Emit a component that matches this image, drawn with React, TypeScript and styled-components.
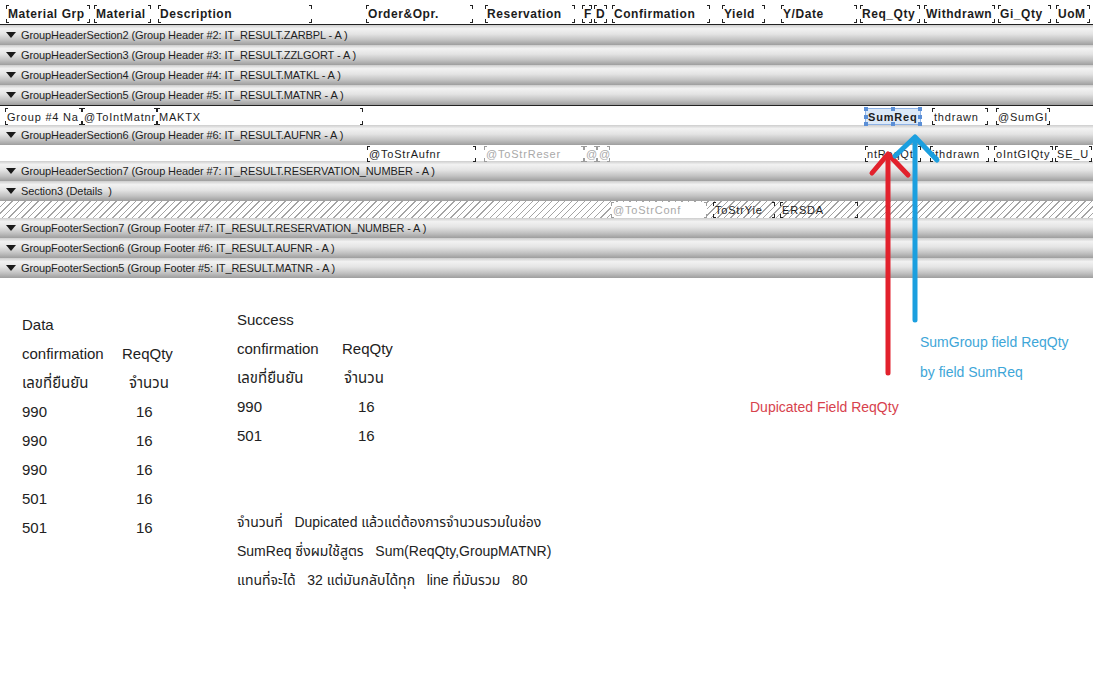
import React from "react";
import styled, { createGlobalStyle, css } from "styled-components";

const Global = createGlobalStyle`
  html, body { margin: 0; padding: 0; background: #fff; }
  body { font-family: "Liberation Sans", Arial, "Noto Sans Thai", "Noto Sans", sans-serif; color: #222; }
`;

const Page = styled.div`
  position: relative;
  width: 1093px;
  height: 700px;
  overflow: hidden;
  background: #fff;
`;

const Designer = styled.div`
  display: flex;
  flex-direction: column;
`;

const HeaderRow = styled.div`
  position: relative;
  height: 24px;
  border-bottom: 1px solid #222;
`;

const Band = styled.div<{ $h: number; $top?: boolean; $hatch?: boolean }>`
  position: relative;
  box-sizing: border-box;
  height: ${(p) => p.$h}px;
  background: #fff;
  ${(p) => p.$top && css`border-top: 1px solid #222;`}
  ${(p) =>
    p.$hatch &&
    css`
      background: repeating-linear-gradient(135deg, #fff 0 3.6px, #a4a4a4 3.6px 4.6px);
    `}
`;

const Bar = styled.div`
  display: flex;
  align-items: center;
  gap: 4px;
  height: 20px;
  padding-left: 6px;
  box-sizing: border-box;
  background: linear-gradient(
    to bottom,
    #cdcdcd 0%,
    #f2f2f2 18%,
    #e4e4e4 45%,
    #c2c2c2 75%,
    #9e9e9e 100%
  );
  font-size: 11px;
  letter-spacing: -0.1px;
  color: #1e1e1e;
  white-space: pre;
`;

const Tri = styled.span`
  width: 0;
  height: 0;
  border-left: 5px solid transparent;
  border-right: 5px solid transparent;
  border-top: 6px solid #1a1a1a;
  margin-right: 1px;
`;

const tick = (c: string) => `
  linear-gradient(${c},${c}) left top / 1px 4px no-repeat,
  linear-gradient(${c},${c}) left top / 3px 1px no-repeat,
  linear-gradient(${c},${c}) left bottom / 1px 4px no-repeat,
  linear-gradient(${c},${c}) left bottom / 3px 1px no-repeat,
  linear-gradient(${c},${c}) right top / 1px 4px no-repeat,
  linear-gradient(${c},${c}) right top / 3px 1px no-repeat,
  linear-gradient(${c},${c}) right bottom / 1px 4px no-repeat,
  linear-gradient(${c},${c}) right bottom / 3px 1px no-repeat`;

const Field = styled.div<{
  $x: number;
  $w: number;
  $top: number;
  $h: number;
  $muted?: boolean;
  $bold?: boolean;
  $fill?: boolean;
  $head?: boolean;
  $sel?: boolean;
}>`
  position: absolute;
  left: ${(p) => p.$x}px;
  top: ${(p) => p.$top}px;
  width: ${(p) => p.$w}px;
  height: ${(p) => p.$h}px;
  box-sizing: border-box;
  padding-left: 2px;
  display: flex;
  align-items: center;
  white-space: pre;
  overflow: hidden;
  color: ${(p) => (p.$muted ? "#a9a9a9" : "#1c1c1c")};
  font-size: ${(p) => (p.$head ? "12px" : "11px")};
  font-weight: ${(p) => (p.$bold ? 700 : 400)};
  letter-spacing: ${(p) => (p.$head ? "0.55px" : "0.8px")};
  background: ${(p) => tick(p.$muted ? "#9c9c9c" : "#222")}
    ${(p) => (p.$fill ? ", #fff" : "")};
  ${(p) =>
    p.$sel &&
    css`
      overflow: visible;
      background: #dce9f8;
      border: 1px solid #8fb3e6;
    `}
`;

const Handle = styled.span<{ $l: string; $t: string }>`
  position: absolute;
  left: ${(p) => p.$l};
  top: ${(p) => p.$t};
  width: 4px;
  height: 4px;
  margin: -2px 0 0 -2px;
  background: #5b8fd6;
`;

const Notes = styled.div`
  display: flex;
  align-items: flex-start;
`;

const DataCol = styled.div`
  margin-left: 22px;
  width: 215px;
  padding-top: 32px;
`;

const SuccessCol = styled.div`
  width: 513px;
  padding-top: 27px;
`;

const Table = styled.div<{ $first: number }>`
  display: grid;
  grid-template-columns: ${(p) => p.$first}px auto;
  font-size: 15px;
  line-height: 29px;
  color: #222;
`;

const Cell = styled.div<{ $in?: number; $span?: boolean }>`
  padding-left: ${(p) => p.$in ?? 0}px;
  white-space: pre;
  ${(p) => p.$span && css`grid-column: 1 / span 2;`}
`;

const Para = styled.div`
  margin-top: 58px;
  font-size: 14px;
  line-height: 29px;
  white-space: pre;
  color: #222;
`;

const CalloutCol = styled.div`
  display: flex;
  flex-direction: column;
  padding-top: 49px;
`;

const BlueNote = styled.div`
  margin-left: 170px;
  font-size: 14px;
  line-height: 30px;
  color: #3ea6d8;
`;

const RedNote = styled.div`
  margin-top: 5px;
  font-size: 14px;
  line-height: 30px;
  color: #d7424d;
`;

const Overlay = styled.svg`
  position: absolute;
  left: 0;
  top: 0;
  pointer-events: none;
`;

type F = { x: number; w: number; t: string; muted?: boolean; bold?: boolean; fill?: boolean; sel?: boolean };

const headerFields: F[] = [
  { x: 6, w: 84, t: "Material Grp", bold: true },
  { x: 94, w: 57, t: "Material", bold: true },
  { x: 158, w: 154, t: "Description", bold: true },
  { x: 366, w: 107, t: "Order&Opr.", bold: true },
  { x: 485, w: 90, t: "Reservation", bold: true },
  { x: 582, w: 10, t: "F", bold: true },
  { x: 594, w: 13, t: "D", bold: true },
  { x: 612, w: 98, t: "Confirmation", bold: true },
  { x: 722, w: 43, t: "Yield", bold: true },
  { x: 781, w: 76, t: "Y/Date", bold: true },
  { x: 860, w: 60, t: "Req_Qty", bold: true },
  { x: 924, w: 71, t: "Withdrawn", bold: true },
  { x: 998, w: 53, t: "Gi_Qty", bold: true },
  { x: 1056, w: 34, t: "UoM", bold: true },
];

const groupRow: F[] = [
  { x: 5, w: 77, t: "Group #4 Na" },
  { x: 82, w: 75, t: "@ToIntMatnr" },
  { x: 157, w: 206, t: "MAKTX" },
  { x: 865, w: 56, t: "SumReq", bold: true, sel: true },
  { x: 932, w: 56, t: "thdrawn" },
  { x: 996, w: 54, t: "@SumGI" },
];

const aufnrRow: F[] = [
  { x: 367, w: 109, t: "@ToStrAufnr" },
  { x: 484, w: 100, t: "@ToStrReser", muted: true },
  { x: 584, w: 13, t: "@", muted: true },
  { x: 597, w: 13, t: "@", muted: true },
  { x: 865, w: 56, t: "ntReqQt" },
  { x: 930, w: 59, t: "ithdrawn" },
  { x: 994, w: 59, t: "oIntGIQty" },
  { x: 1055, w: 37, t: "SE_U" },
];

const detailRow: F[] = [
  { x: 611, w: 96, t: "@ToStrConf", muted: true, fill: true },
  { x: 713, w: 62, t: "ToStrYie" },
  { x: 780, w: 78, t: "ERSDA" },
];

const handles: [string, string][] = [
  ["0%", "0%"], ["50%", "0%"], ["100%", "0%"],
  ["0%", "50%"], ["100%", "50%"],
  ["0%", "100%"], ["50%", "100%"], ["100%", "100%"],
];

const Fields: React.FC<{ items: F[]; top: number; h: number; head?: boolean }> = ({ items, top, h, head }) => (
  <>
    {items.map((f, i) => (
      <Field
        key={i}
        $x={f.x}
        $w={f.w}
        $top={top}
        $h={h}
        $muted={f.muted}
        $bold={f.bold}
        $fill={f.fill}
        $head={head}
        $sel={f.sel}
      >
        {f.t}
        {f.sel && handles.map(([l, t], j) => <Handle key={j} $l={l} $t={t} />)}
      </Field>
    ))}
  </>
);

const SectionBar: React.FC<{ label: string }> = ({ label }) => (
  <Bar>
    <Tri />
    {label}
  </Bar>
);

export default function App() {
  return (
    <Page>
      <Global />
      <Designer>
        <HeaderRow>
          <Fields items={headerFields} top={5} h={18} head />
        </HeaderRow>
        <SectionBar label="GroupHeaderSection2 (Group Header #2: IT_RESULT.ZARBPL - A )" />
        <SectionBar label="GroupHeaderSection3 (Group Header #3: IT_RESULT.ZZLGORT - A )" />
        <SectionBar label="GroupHeaderSection4 (Group Header #4: IT_RESULT.MATKL - A )" />
        <SectionBar label="GroupHeaderSection5 (Group Header #5: IT_RESULT.MATNR - A )" />
        <Band $h={20} $top>
          <Fields items={groupRow} top={2} h={17} />
        </Band>
        <SectionBar label="GroupHeaderSection6 (Group Header #6: IT_RESULT.AUFNR - A )" />
        <Band $h={16}>
          <Fields items={aufnrRow} top={1} h={16} />
        </Band>
        <SectionBar label="GroupHeaderSection7 (Group Header #7: IT_RESULT.RESERVATION_NUMBER - A )" />
        <SectionBar label="Section3 (Details  )" />
        <Band $h={17} $hatch>
          <Fields items={detailRow} top={1} h={16} />
        </Band>
        <SectionBar label="GroupFooterSection7 (Group Footer #7: IT_RESULT.RESERVATION_NUMBER - A )" />
        <SectionBar label="GroupFooterSection6 (Group Footer #6: IT_RESULT.AUFNR - A )" />
        <SectionBar label="GroupFooterSection5 (Group Footer #5: IT_RESULT.MATNR - A )" />
      </Designer>

      <Notes>
        <DataCol>
          <Table $first={100}>
            <Cell $span>Data</Cell>
            <Cell>confirmation</Cell>
            <Cell>ReqQty</Cell>
            <Cell>เลขที่ยืนยัน</Cell>
            <Cell $in={7}>จำนวน</Cell>
            {["990", "990", "990", "501", "501"].map((v, i) => (
              <React.Fragment key={i}>
                <Cell>{v}</Cell>
                <Cell $in={14}>16</Cell>
              </React.Fragment>
            ))}
          </Table>
        </DataCol>
        <SuccessCol>
          <Table $first={105}>
            <Cell $span>Success</Cell>
            <Cell>confirmation</Cell>
            <Cell>ReqQty</Cell>
            <Cell>เลขที่ยืนยัน</Cell>
            <Cell $in={2}>จำนวน</Cell>
            {["990", "501"].map((v, i) => (
              <React.Fragment key={i}>
                <Cell>{v}</Cell>
                <Cell $in={16}>16</Cell>
              </React.Fragment>
            ))}
          </Table>
          <Para>
            <div>{"จำนวนที่   Dupicated แล้วแต่ต้องการจำนวนรวมในช่อง"}</div>
            <div>{"SumReq ซึ่งผมใช้สูตร   Sum(ReqQty,GroupMATNR)"}</div>
            <div>{"แทนที่จะได้   32 แต่มันกลับได้ทุก   line ที่มันรวม   80"}</div>
          </Para>
        </SuccessCol>
        <CalloutCol>
          <BlueNote>
            <div>SumGroup field ReqQty</div>
            <div>by field SumReq</div>
          </BlueNote>
          <RedNote>Dupicated Field ReqQty</RedNote>
        </CalloutCol>
      </Notes>

      <Overlay width={1093} height={700} viewBox="0 0 1093 700">
        <g fill="none" strokeWidth={5} strokeLinecap="round" strokeLinejoin="round">
          <path d="M888 373 L888 156" stroke="#e2212c" />
          <path d="M872 173 L888 154 L908 175" stroke="#e2212c" />
          <path d="M915 320 L915 139" stroke="#1b9fdf" />
          <path d="M895 156 L915 137 L937 160" stroke="#1b9fdf" />
        </g>
      </Overlay>
    </Page>
  );
}
